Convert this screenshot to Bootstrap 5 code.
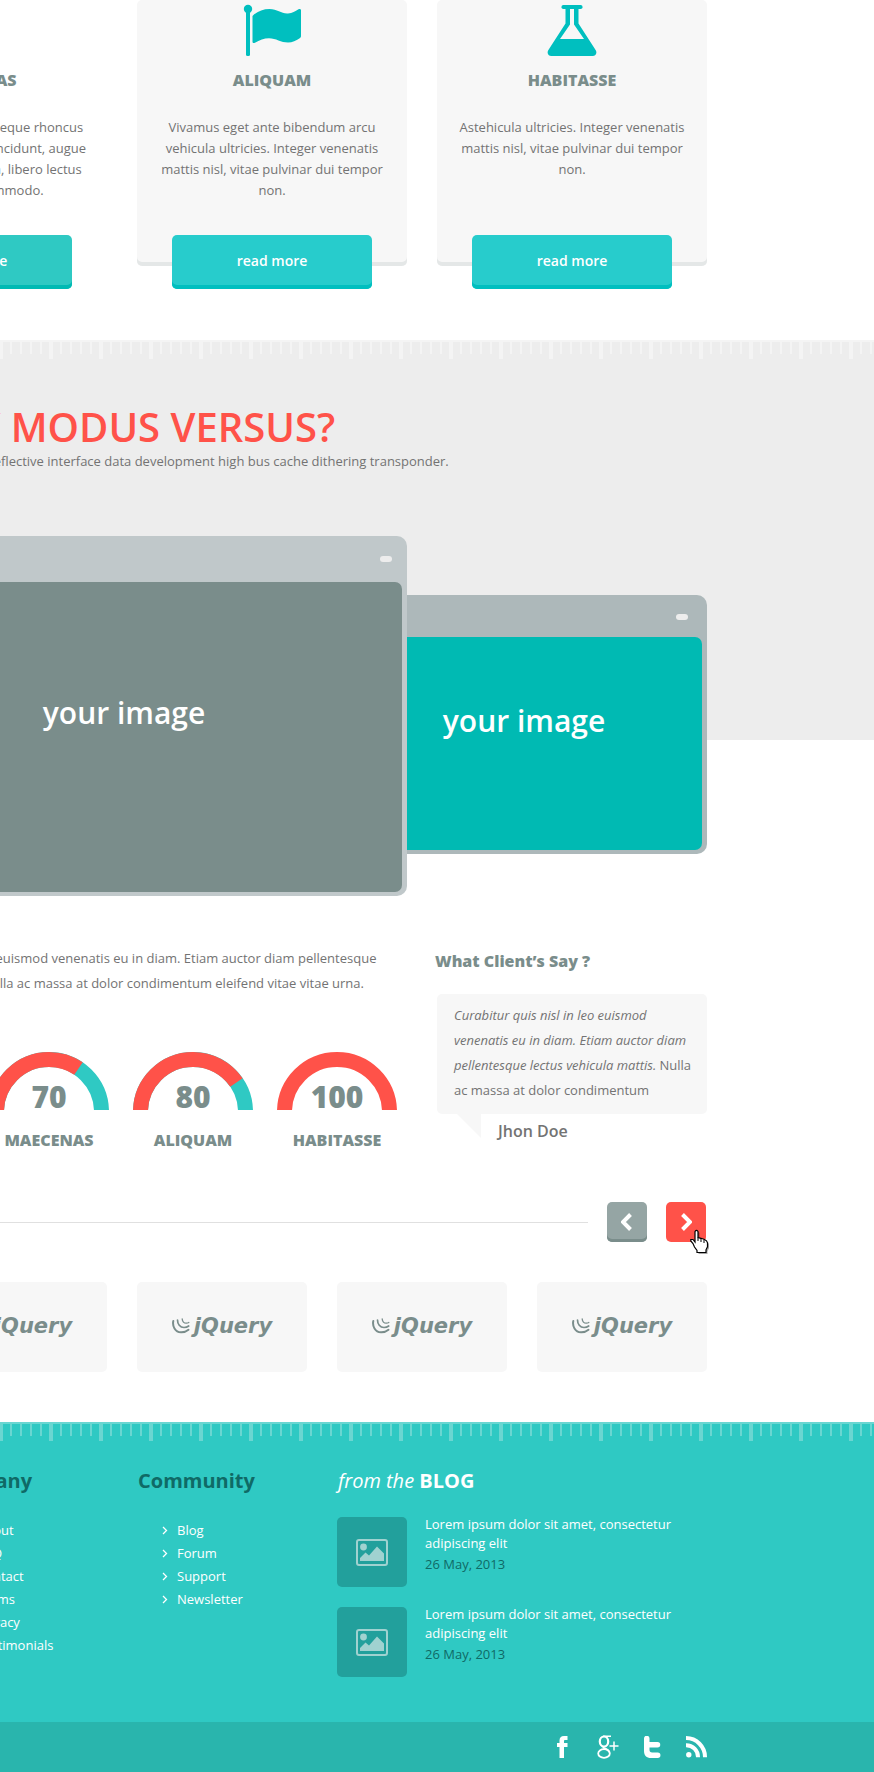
<!DOCTYPE html>
<html lang="en">
<head>
<meta charset="utf-8">
<meta name="viewport" content="width=device-width, initial-scale=1">
<title>Modus Versus</title>
<link href="https://cdn.jsdelivr.net/npm/bootstrap@5.3.0/dist/css/bootstrap.min.css" rel="stylesheet">
<style>
  body { font-family: "Open Sans", "Noto Sans", sans-serif; font-size: 13px; line-height: 25px; color: #737373; background: #fff; overflow-x: hidden; }
  h2, h3, h4, p { margin: 0; }
  /* The 1170px shell keeps its right gutter; on narrow windows it runs off to the left */
  .band { display: flex; justify-content: flex-end; padding-right: 167px; overflow: hidden; }
  .shell { flex: 0 0 1170px; min-width: 0; }
  .line { display: flex; justify-content: flex-end; }
  .gap-30 { gap: 30px; }
  .label { font-size: 16px; line-height: 22px; font-weight: 800; color: #7a8d8b; }

  /* services */
  .services { padding-bottom: 74px; }
  .service { flex: 0 0 270px; height: 266px; display: flex; flex-direction: column; align-items: center; text-align: center; border-radius: 5px; padding: 4px 20px 0; }
  .service.filled { background: #f7f7f7; box-shadow: inset 0 -4px #e4e7e7; }
  .service svg { flex: none; }
  .service .label { margin: 13px 0 26px; }
  .service p { line-height: 21px; flex: 0 0 118px; width: 100%; }
  .service.edge p { white-space: nowrap; }
  .btn-more { width: 200px; flex: 0 0 54px; border: 0; border-radius: 5px; padding: 0 0 4px; font-size: 14px; font-weight: 600; color: #fff; background: #27cccc; box-shadow: inset 0 -4px #00bfbf; }
  .btn-more:hover { color: #fff; background: #27cccc; }
  .edge .btn-more { background: #2fc9c3; box-shadow: inset 0 -4px #00bab3; }

  /* ruler edge */
  .ruler { --tick: #f4f4f4; height: 19px; background:
    linear-gradient(var(--tick), var(--tick)) 0 0 / 100% 2px no-repeat,
    linear-gradient(90deg, var(--tick) 4px, transparent 4px) -1px 0 / 50px 19px repeat-x,
    linear-gradient(90deg, var(--tick) 2px, transparent 2px) 0 0 / 10px 14px repeat-x; }

  /* showcase */
  .showcase { background: linear-gradient(#ededed, #ededed) 0 0 / 100% 400px no-repeat; }
  .intro { padding: 44px 0 65px; text-align: center; }
  .showcase h2 { font-size: 40px; line-height: 48px; font-weight: 600; color: #ff5249; white-space: nowrap; }
  .showcase .sub { line-height: 20px; }
  .frame { border-radius: 10px; padding: 0 5px 4px; display: flex; flex-direction: column; }
  .frame-big { flex: 0 0 570px; height: 360px; background: #c0c8ca; position: relative; z-index: 1; }
  .frame-side { flex: 0 0 370px; height: 259px; background: #adb8ba; margin: 59px 0 0 -70px; }
  .frame-bar { display: flex; justify-content: flex-end; padding: 20px 10px 0 0; flex: 0 0 46px; }
  .frame-side .frame-bar { padding: 19px 14px 0 0; flex-basis: 42px; }
  .pill { width: 12px; height: 6px; border-radius: 3px; background: #ededed; }
  .shot { flex: 1; border-radius: 7px; color: #fff; font-size: 30px; font-weight: 600; display: flex; justify-content: center; align-items: center; padding: 0 0 50px 4px; }
  .frame-big .shot { background: #7a8d8b; }
  .frame-side .shot { background: #00bab3; padding-bottom: 46px; }

  /* skills and testimonial */
  .about { padding-top: 50px; }
  .skills { flex: 0 0 570px; white-space: nowrap; }
  .skills p { padding-left: 8px; }
  .gauges { padding: 56px 10px 0 0; }
  .gauge { width: 120px; text-align: center; position: relative; }
  .gauge svg { display: block; }
  .gauge strong { position: absolute; left: 0; right: 0; top: 29px; font-size: 30px; line-height: 32px; font-weight: 800; color: #7a8d8b; }
  .gauge .label { margin-top: 19px; }
  .client { flex: 0 0 270px; }
  .client .label { margin: 4px 0 22px -2px; }
  .quote { background: #f7f7f7; border-radius: 5px; padding: 9px 12px 11px 17px; }
  .tail { width: 24px; height: 24px; background: #f7f7f7; clip-path: polygon(0 0, 100% 0, 100% 100%); margin-left: 20px; }
  .who { font-size: 16px; font-weight: 600; line-height: 24px; margin: 5px 0 0 17px; }

  /* partners */
  .carousel-bar { margin-top: 51px; }
  .divider { flex: 1; height: 1px; background: #e0e0e0; margin-right: 19px; }
  .btn-nav { width: 40px; height: 40px; padding: 0; border: 0; border-radius: 5px; background: #95a5a4; box-shadow: inset 0 -3px #7a8d8b; display: flex; align-items: center; justify-content: center; position: relative; }
  .btn-nav.hot { background: #ff5249; box-shadow: none; margin: 0 1px 0 19px; }
  .hand { position: absolute; left: 24px; top: 27px; }
  .partners { padding: 40px 0 50px; }
  .partner { flex: 0 0 170px; height: 90px; border-radius: 5px; background: #f7f7f7; display: flex; align-items: center; justify-content: center; padding-bottom: 2px; color: #7a8d8b; text-decoration: none; font: italic bold 21px/26px "DejaVu Sans", sans-serif; }

  /* footer */
  .foot { background: #2fc9c3; }
  .foot .ruler { --tick: #6ad6d1; }
  .foot-cols { padding: 26px 0 25px; }
  .foot h3 { font-size: 20px; line-height: 28px; font-weight: 700; color: #0f6a66; padding-left: 1px; }
  .foot a { color: #fff; text-decoration: none; }
  .foot-col { flex: 0 0 170px; }
  .foot-col ul { margin: 24px 0 0; padding: 0 0 0 25px; list-style: none; }
  .foot-col li { line-height: 23px; display: flex; align-items: center; gap: 9px; font-weight: 500; }
  .blog { flex: 0 0 370px; }
  .foot .blog h3 { color: #fff; margin-bottom: 22px; }
  .blog h3 em { font-weight: 400; }
  .post { display: flex; gap: 18px; height: 70px; margin-bottom: 20px; }
  .thumb { flex: 0 0 70px; border-radius: 5px; background: #22a09c; display: flex; align-items: center; justify-content: center; }
  .post p { line-height: 19px; width: 265px; margin-top: -2px; }
  .post time { display: block; line-height: 23px; color: #0f6a66; }
  .social { background: #29b5ad; height: 50px; align-items: center; gap: 25px; }
</style>
</head>
<body>
<svg width="0" height="0" class="d-none" aria-hidden="true">
  <symbol id="swirl" viewBox="0 0 18 18"><g fill="none" stroke="#7a8d8b" stroke-linecap="round"><path stroke-width="2" d="M1.300 4C.2 9 3 15 9 15.300c3 .1 5.500-.8 7.500-2.500"/><path stroke-width="1.700" d="M5.500 3c0 4 2.500 7.500 6.500 7.500 2 0 3.500-.6 4.700-1.500"/><path stroke-width="1.300" d="M10.200 2c.3 2.800 2 4.200 4 4.200 1 0 1.900-.2 2.600-.7"/></g></symbol>
  <symbol id="chev" viewBox="0 0 6 9"><path d="M1 1l3.500 3.500L1 8" fill="none" stroke="#fff" stroke-width="1.300"/></symbol>
  <symbol id="picture" viewBox="0 0 32 27"><rect x="1" y="1" width="30" height="25" rx="2" fill="none" stroke="#a0d2d0" stroke-width="2"/><circle cx="7.500" cy="8" r="3.400" fill="#a0d2d0"/><path d="M4 22v-3l5.500-5.500 3.500 3L21 7.500l7 7V22z" fill="#a0d2d0"/></symbol>
</svg>

<section class="band">
  <div class="shell">
    <div class="line gap-30 services">
      <article class="service edge">
        <svg width="52" height="52" aria-hidden="true"></svg>
        <h3 class="label">MAECENAS</h3>
        <p>Vestibulum ante quis neque rhoncus<br>fermentum. Vivamus tincidunt, augue<br>ut dictum sem pretium, libero lectus<br>sodales quis commodo.</p>
        <button class="btn btn-more">read more</button>
      </article>
      <article class="service filled">
        <svg width="58" height="52" viewBox="0 0 58 52" fill="#00bfbf" aria-hidden="true"><circle cx="5" cy="5" r="4.200"/><rect x="3" y="6" width="4" height="46" rx="1.500"/><path d="M9.500 12C14 7.500 20 5 26.500 5c8 0 12 5 18.500 4.500 4.500-.3 7-2.500 10.500-4.300 1.400-.7 2.500-.2 2.500 1.200V32c0 1-.4 1.600-1.300 2.200-4 2.500-7 4.300-11.700 4.300-7 0-12-4.300-19-4.300-5 0-9.500 1.800-14 4.500-1.400.8-2.500.3-2.500-1z"/></svg>
        <h3 class="label">ALIQUAM</h3>
        <p>Vivamus eget ante bibendum arcu vehicula ultricies. Integer venenatis mattis nisl, vitae pulvinar dui tempor non.</p>
        <button class="btn btn-more">read more</button>
      </article>
      <article class="service filled">
        <svg width="50" height="52" viewBox="0 0 50 52" aria-hidden="true"><rect x="14.500" y="1" width="21" height="4" rx="1.800" fill="#00bfbf"/><path fill="#00bfbf" fill-rule="evenodd" d="M18.500 3h13v16.500L48.600 46c1.800 3 .4 6-3 6H4.400c-3.400 0-4.800-3-3-6l17.100-26.500zM23 5v15.500L13 35h24L27 20.500V5z"/></svg>
        <h3 class="label">HABITASSE</h3>
        <p>Astehicula ultricies. Integer venenatis mattis nisl, vitae pulvinar dui tempor non.</p>
        <button class="btn btn-more">read more</button>
      </article>
    </div>
  </div>
</section>

<section class="showcase">
  <div class="ruler"></div>
  <div class="band">
    <div class="shell">
      <div class="intro">
        <h2>WHY MODUS VERSUS?</h2>
        <p class="sub">Recursive element backbone to reflective interface data development high bus cache dithering transponder.</p>
      </div>
      <div class="line">
        <div class="frame frame-big">
          <div class="frame-bar"><span class="pill"></span></div>
          <div class="shot">your image</div>
        </div>
        <div class="frame frame-side">
          <div class="frame-bar"><span class="pill"></span></div>
          <div class="shot">your image</div>
        </div>
      </div>
    </div>
  </div>
</section>

<section class="band">
  <div class="shell">
    <div class="line gap-30 about">
      <div class="skills">
        <p>Curabitur quis nisl in leo euismod venenatis eu in diam. Etiam auctor diam pellentesque<br>lectus vehicula mattis. Nulla ac massa at dolor condimentum eleifend vitae vitae urna.</p>
        <div class="line gap-4 gauges">
          <div class="gauge">
            <svg width="120" height="58" viewBox="0 0 120 58" fill="none" stroke-width="15"><path d="M7.500 60a52.500 52.500 0 0 1 105 0" stroke="#2fc9c3"/><path d="M7.500 60a52.500 52.500 0 0 1 105 0" stroke="#ff5249" pathLength="100" stroke-dasharray="69 100"/></svg>
            <strong>70</strong><h4 class="label">MAECENAS</h4>
          </div>
          <div class="gauge">
            <svg width="120" height="58" viewBox="0 0 120 58" fill="none" stroke-width="15"><path d="M7.500 60a52.500 52.500 0 0 1 105 0" stroke="#2fc9c3"/><path d="M7.500 60a52.500 52.500 0 0 1 105 0" stroke="#ff5249" pathLength="100" stroke-dasharray="81 100"/></svg>
            <strong>80</strong><h4 class="label">ALIQUAM</h4>
          </div>
          <div class="gauge">
            <svg width="120" height="58" viewBox="0 0 120 58" fill="none" stroke-width="15"><path d="M7.500 60a52.500 52.500 0 0 1 105 0" stroke="#ff5249"/></svg>
            <strong>100</strong><h4 class="label">HABITASSE</h4>
          </div>
        </div>
      </div>
      <div class="client">
        <h3 class="label">What Client’s Say ?</h3>
        <blockquote class="quote m-0"><em>Curabitur quis nisl in leo euismod venenatis eu in diam. Etiam auctor diam pellentesque lectus vehicula mattis.</em> Nulla ac massa at dolor condimentum</blockquote>
        <div class="d-flex"><span class="tail"></span><span class="who">Jhon Doe</span></div>
      </div>
    </div>

    <div class="d-flex align-items-center carousel-bar">
      <div class="divider"></div>
      <button class="btn-nav" aria-label="Previous"><svg width="12" height="18" viewBox="0 0 12 18" fill="none" stroke="#fff" stroke-width="4"><path d="M9.500 1.500L2 9l7.500 7.500"/></svg></button>
      <button class="btn-nav hot" aria-label="Next"><svg width="12" height="18" viewBox="0 0 12 18" fill="none" stroke="#fff" stroke-width="4"><path d="M2.500 1.500L10 9l-7.500 7.500"/></svg>
        <svg class="hand" width="20" height="25" viewBox="0 0 20 25" aria-hidden="true"><path d="M5 2.500q1.500-2.300 3 0v6l3 .8 3 1 2.500 1.500 1 2v4l-1.500 3v2.700H7v-2L4.500 18 3 14.500.8 12v-1.500H3L5 13z" transform="translate(1.500 1.500)" fill="#000" opacity=".35"/><path d="M5 2.500q1.500-2.300 3 0v6l3 .8 3 1 2.500 1.500 1 2v4l-1.500 3v2.700H7v-2L4.500 18 3 14.500.8 12v-1.500H3L5 13z" fill="#fff" stroke="#000" stroke-width="1.200"/><path d="M8 8.500V12m3-2.500V13m3-2.500V14" stroke="#000"/></svg>
      </button>
    </div>

    <div class="line gap-30 partners">
      <a class="partner" href="#"><svg class="me-1" width="18" height="18" aria-hidden="true"><use href="#swirl"/></svg>jQuery</a>
      <a class="partner" href="#"><svg class="me-1" width="18" height="18" aria-hidden="true"><use href="#swirl"/></svg>jQuery</a>
      <a class="partner" href="#"><svg class="me-1" width="18" height="18" aria-hidden="true"><use href="#swirl"/></svg>jQuery</a>
      <a class="partner" href="#"><svg class="me-1" width="18" height="18" aria-hidden="true"><use href="#swirl"/></svg>jQuery</a>
    </div>
  </div>
</section>

<footer class="foot">
  <div class="ruler"></div>
  <div class="band">
    <div class="shell">
      <div class="line gap-30 foot-cols">
        <nav class="foot-col">
          <h3>Company</h3>
          <ul>
            <li><svg width="6" height="9"><use href="#chev"/></svg><a href="#">About</a></li>
            <li><svg width="6" height="9"><use href="#chev"/></svg><a href="#">FAQ</a></li>
            <li><svg width="6" height="9"><use href="#chev"/></svg><a href="#">Contact</a></li>
            <li><svg width="6" height="9"><use href="#chev"/></svg><a href="#">Terms</a></li>
            <li><svg width="6" height="9"><use href="#chev"/></svg><a href="#">Privacy</a></li>
            <li><svg width="6" height="9"><use href="#chev"/></svg><a href="#">Testimonials</a></li>
          </ul>
        </nav>
        <nav class="foot-col">
          <h3>Community</h3>
          <ul>
            <li><svg width="6" height="9"><use href="#chev"/></svg><a href="#">Blog</a></li>
            <li><svg width="6" height="9"><use href="#chev"/></svg><a href="#">Forum</a></li>
            <li><svg width="6" height="9"><use href="#chev"/></svg><a href="#">Support</a></li>
            <li><svg width="6" height="9"><use href="#chev"/></svg><a href="#">Newsletter</a></li>
          </ul>
        </nav>
        <div class="blog">
          <h3><em>from the</em> BLOG</h3>
          <div class="post"><span class="thumb"><svg width="32" height="27"><use href="#picture"/></svg></span><p><a href="#">Lorem ipsum dolor sit amet, consectetur adipiscing elit</a><time datetime="2013-05-26">26 May, 2013</time></p></div>
          <div class="post"><span class="thumb"><svg width="32" height="27"><use href="#picture"/></svg></span><p><a href="#">Lorem ipsum dolor sit amet, consectetur adipiscing elit</a><time datetime="2013-05-26">26 May, 2013</time></p></div>
        </div>
      </div>
    </div>
  </div>
  <div class="band social">
    <a href="#" class="d-flex me-1" aria-label="Facebook"><svg width="11" height="22" viewBox="0 0 11 22" fill="#fff"><path d="M2.500 22V11H0V7h2.500V4.500C2.500 1.500 4 0 7 0h3.500v4H8.200C7.300 4 7 4.400 7 5.200V7h3.500v4H7v11z"/></svg></a>
    <a href="#" class="d-flex" aria-label="Google Plus"><svg width="22" height="24" viewBox="0 0 22 24" fill="none" stroke="#fff"><ellipse cx="7" cy="6.500" rx="4.200" ry="5" stroke-width="2.200"/><ellipse cx="7" cy="18.500" rx="5.800" ry="4.300" stroke-width="1.800"/><path d="M6 1.200h8M6.500 11.500c-2 2 5.500 2 6 6" stroke-width="1.600"/><path d="M12.500 11h9M17 6.500v9" stroke-width="1.500"/></svg></a>
    <a href="#" class="d-flex" aria-label="Twitter"><svg width="17" height="22" viewBox="0 0 17 22" fill="#fff"><path d="M0 2.500a2.700 2.700 0 0 1 5.500 0V6h8a2.700 2.700 0 0 1 0 5.500h-8v2.300c0 1.900.8 2.700 2.700 2.700h5.500a2.700 2.700 0 0 1 0 5.500H7c-4.500 0-7-2.500-7-7z"/></svg></a>
    <a href="#" class="d-flex" aria-label="RSS"><svg width="21" height="22" viewBox="0 0 21 22" fill="none" stroke="#fff" stroke-width="4"><circle cx="2.800" cy="18.700" r="2.700" fill="#fff" stroke="none"/><path d="M0 9.200A11.800 11.800 0 0 1 12 21.300M0 2.100A19 19 0 0 1 19 21.300"/></svg></a>
  </div>
</footer>
<script src="https://cdn.jsdelivr.net/npm/bootstrap@5.3.0/dist/js/bootstrap.bundle.min.js"></script>
</body>
</html>
